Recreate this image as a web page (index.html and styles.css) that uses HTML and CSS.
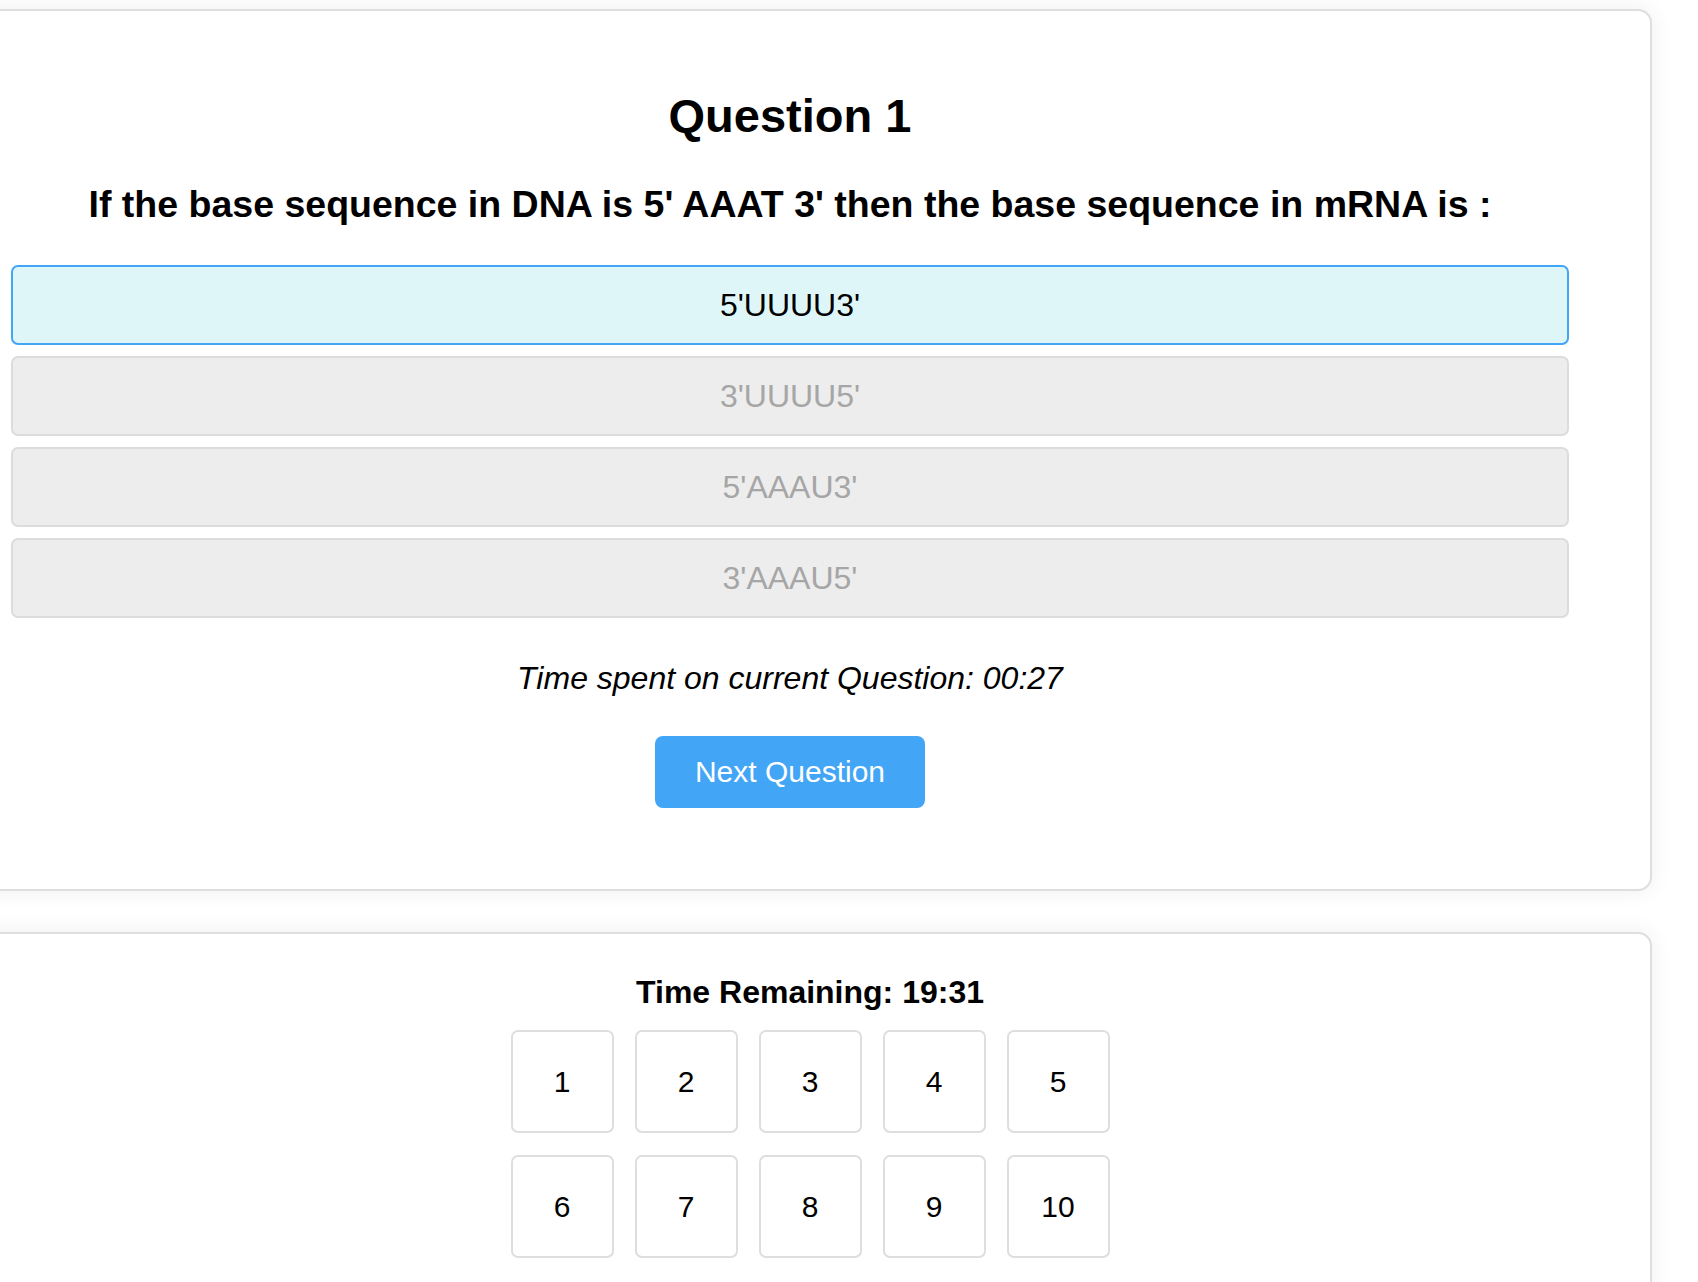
FILE: index.html
```html
<!DOCTYPE html>
<html lang="en">
<head>
<meta charset="utf-8">
<title>Quiz</title>
<link rel="stylesheet" href="styles.css">
</head>
<body>
<div class="page">
  <section class="card quiz-card">
    <h1 class="q-title">Question 1</h1>
    <p class="q-text">If the base sequence in DNA is 5' AAAT 3' then the base sequence in mRNA is :</p>
    <div class="options">
      <div class="option selected">5'UUUU3'</div>
      <div class="option">3'UUUU5'</div>
      <div class="option">5'AAAU3'</div>
      <div class="option">3'AAAU5'</div>
    </div>
    <p class="time-spent">Time spent on current Question: 00:27</p>
    <button class="next-btn">Next Question</button>
  </section>
  <section class="card nav-card">
    <p class="remaining">Time Remaining: 19:31</p>
    <div class="grid">
      <div class="num">1</div>
      <div class="num">2</div>
      <div class="num">3</div>
      <div class="num">4</div>
      <div class="num">5</div>
      <div class="num">6</div>
      <div class="num">7</div>
      <div class="num">8</div>
      <div class="num">9</div>
      <div class="num">10</div>
    </div>
  </section>
</div>
</body>
</html>
```
FILE: styles.css
```css
html, body {
  margin: 0;
  padding: 0;
  background: #ffffff;
  overflow: hidden;
}
body {
  font-family: "Liberation Sans", Arial, sans-serif;
  color: #000;
}
.page {
  padding-top: 9px;
  margin-left: -70px;
  width: 1722px;
  display: flex;
  flex-direction: column;
  gap: 41px;
}
.card {
  background: #fff;
  border: 2px solid #dedede;
  border-radius: 14px;
  box-shadow: 0 0 22px rgba(0, 0, 0, 0.07);
  box-sizing: border-box;
}
.quiz-card {
  padding: 77px 81px 81px 79px;
  display: flex;
  flex-direction: column;
  align-items: center;
}
.q-title {
  margin: 0;
  font-size: 47px;
  line-height: 56px;
  font-weight: bold;
}
.q-text {
  margin: 37px 0 0 0;
  font-size: 37.5px;
  line-height: 46px;
  font-weight: bold;
}
.options {
  margin-top: 38px;
  width: 100%;
  display: flex;
  flex-direction: column;
  gap: 11px;
}
.option {
  height: 80px;
  box-sizing: border-box;
  border: 2px solid #dcdcdc;
  background: #ededed;
  border-radius: 7px;
  display: flex;
  align-items: center;
  justify-content: center;
  font-size: 32px;
  color: #a6a6a6;
}
.option.selected {
  border-color: #42a5f5;
  background: #dff6f9;
  color: #000;
}
.time-spent {
  margin: 41px 0 0 0;
  font-size: 32px;
  line-height: 38px;
  font-style: italic;
}
.next-btn {
  margin-top: 39px;
  width: 270px;
  height: 72px;
  border: none;
  border-radius: 8px;
  background: #42a5f5;
  color: #fff;
  font-family: "Liberation Sans", Arial, sans-serif;
  font-size: 30px;
}
.nav-card {
  padding: 39px 81px 30px 119px;
  display: flex;
  flex-direction: column;
  align-items: center;
  min-height: 400px;
}
.remaining {
  margin: 0;
  font-size: 32px;
  line-height: 38px;
  font-weight: bold;
}
.grid {
  margin-top: 19px;
  display: grid;
  grid-template-columns: repeat(5, 103px);
  grid-auto-rows: 103px;
  gap: 22px 21px;
}
.num {
  border: 2px solid #dedede;
  border-radius: 7px;
  display: flex;
  align-items: center;
  justify-content: center;
  font-size: 30px;
}
```
